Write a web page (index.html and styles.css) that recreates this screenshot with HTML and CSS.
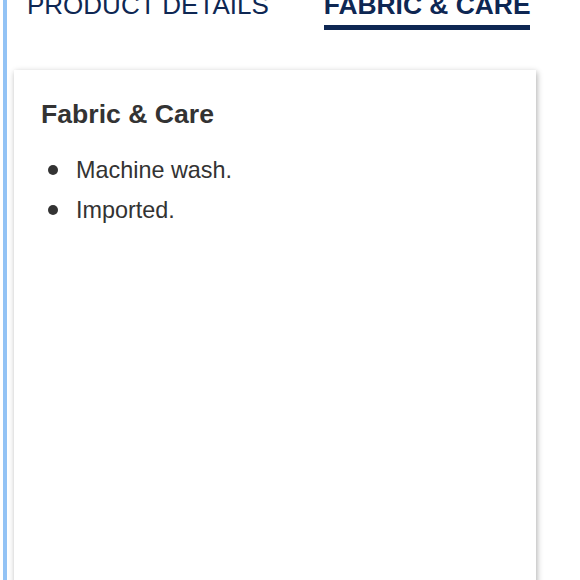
FILE: index.html
```html
<!DOCTYPE html>
<html lang="en">
<head>
<meta charset="utf-8">
<title>Fabric &amp; Care</title>
<link rel="stylesheet" href="styles.css">
</head>
<body>
<div class="panel">
  <nav class="tabs">
    <span class="tab">PRODUCT DETAILS</span>
    <span class="tab tab-active">FABRIC &amp; CARE</span>
  </nav>
  <section class="card">
    <h2 class="card-title">Fabric &amp; Care</h2>
    <ul class="care-list">
      <li class="care-item">Machine wash.</li>
      <li class="care-item">Imported.</li>
    </ul>
  </section>
</div>
</body>
</html>
```

FILE: styles.css
```css
html, body {
  margin: 0;
  padding: 0;
  background: #ffffff;
  height: 100%;
  overflow: hidden;
}

body {
  font-family: "Liberation Sans", Arial, sans-serif;
}

.panel {
  margin-left: 3px;
  border-left: 4px solid #93c3f5;
  min-height: 700px;
  display: flex;
  flex-direction: column;
}

.tabs {
  display: flex;
  gap: 55px;
  margin-top: -10px;
  padding-left: 20px;
}

.tab {
  font-size: 26px;
  line-height: 30px;
  color: #0e2753;
  padding-bottom: 5px;
  border-bottom: 5px solid transparent;
}

.tab-active {
  font-size: 26.4px;
  font-weight: bold;
  border-bottom-color: #0e2753;
}

.card {
  margin-top: 40px;
  margin-left: 7px;
  width: 522px;
  min-height: 600px;
  box-sizing: border-box;
  background: #ffffff;
  box-shadow: 1px 2px 6px rgba(0, 0, 0, 0.32);
  padding: 29px 26px 0 27px;
}

.card-title {
  margin: 0;
  font-size: 26.6px;
  line-height: 30px;
  font-weight: bold;
  color: #333333;
}

.care-list {
  list-style: none;
  margin: 21px 0 0 0;
  padding: 0;
}

.care-item {
  position: relative;
  font-size: 23.4px;
  line-height: 40px;
  color: #333333;
  padding-left: 35px;
}

.care-item::before {
  content: "";
  position: absolute;
  left: 7px;
  top: 15px;
  width: 10px;
  height: 10px;
  border-radius: 50%;
  background: #333333;
}
```
